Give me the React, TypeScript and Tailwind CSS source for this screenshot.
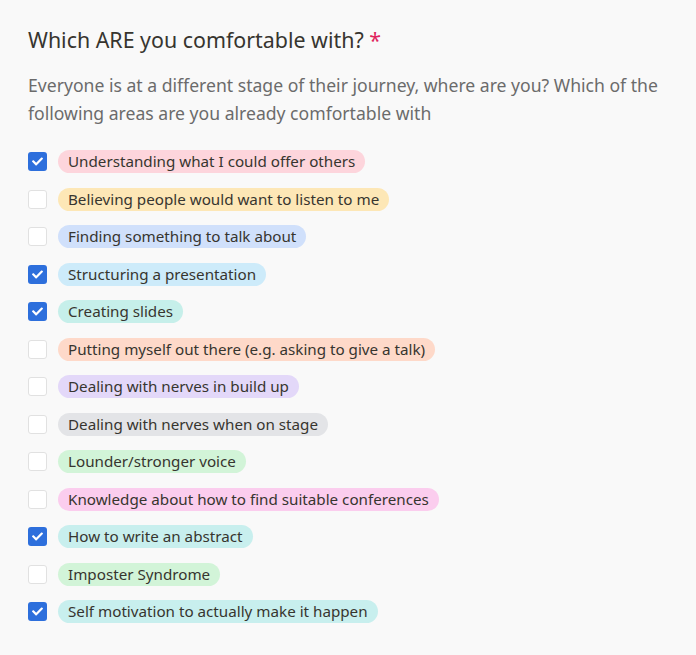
import { FaCheck } from "react-icons/fa";

const items = [
  { label: "Understanding what I could offer others", color: "bg-[#fdd5dc]", checked: true },
  { label: "Believing people would want to listen to me", color: "bg-[#fde7b6]", checked: false },
  { label: "Finding something to talk about", color: "bg-[#d0e0fb]", checked: false },
  { label: "Structuring a presentation", color: "bg-[#cdebfa]", checked: true },
  { label: "Creating slides", color: "bg-[#c6efea]", checked: true },
  { label: "Putting myself out there (e.g. asking to give a talk)", color: "bg-[#fed9c9]", checked: false },
  { label: "Dealing with nerves in build up", color: "bg-[#e3d8f9]", checked: false },
  { label: "Dealing with nerves when on stage", color: "bg-[#e3e4e7]", checked: false },
  { label: "Lounder/stronger voice", color: "bg-[#d2f4d8]", checked: false },
  { label: "Knowledge about how to find suitable conferences", color: "bg-[#fbcdee]", checked: false },
  { label: "How to write an abstract", color: "bg-[#c8efee]", checked: true },
  { label: "Imposter Syndrome", color: "bg-[#d2f4d8]", checked: false },
  { label: "Self motivation to actually make it happen", color: "bg-[#c8efee]", checked: true },
];

export default function App() {
  return (
    <div className="min-h-screen w-full bg-[#f9f9f9] font-['Noto_Sans',sans-serif] text-[#37352f]">
      <div className="px-7 pt-[24px] pb-8">
        <h1 className="text-[21.4px] leading-[32px] text-[#37352f]">
          Which ARE you comfortable with? <span className="text-[#e0245e]">*</span>
        </h1>
        <p className="mt-[15px] text-[17.6px] leading-[28px] text-[#6b6b6b]">
          Everyone is at a different stage of their journey, where are you? Which of the following areas are you
          already comfortable with
        </p>
        <div className="mt-[23px] flex flex-col gap-[14.5px]">
          {items.map((item) => (
            <label key={item.label} className="flex items-center gap-[11px] h-[23px]">
              {item.checked ? (
                <span className="flex h-[19px] w-[19px] items-center justify-center rounded-[3px] bg-[#2d6fdc] text-white">
                  <FaCheck className="h-[11px] w-[11px]" />
                </span>
              ) : (
                <span className="h-[19px] w-[19px] rounded-[3px] border border-[#e1e1e1] bg-white" />
              )}
              <span
                className={`${item.color} rounded-full px-[10px] h-[23px] flex items-center text-[15.2px] text-[#37352f]`}
              >
                {item.label}
              </span>
            </label>
          ))}
        </div>
      </div>
    </div>
  );
}
